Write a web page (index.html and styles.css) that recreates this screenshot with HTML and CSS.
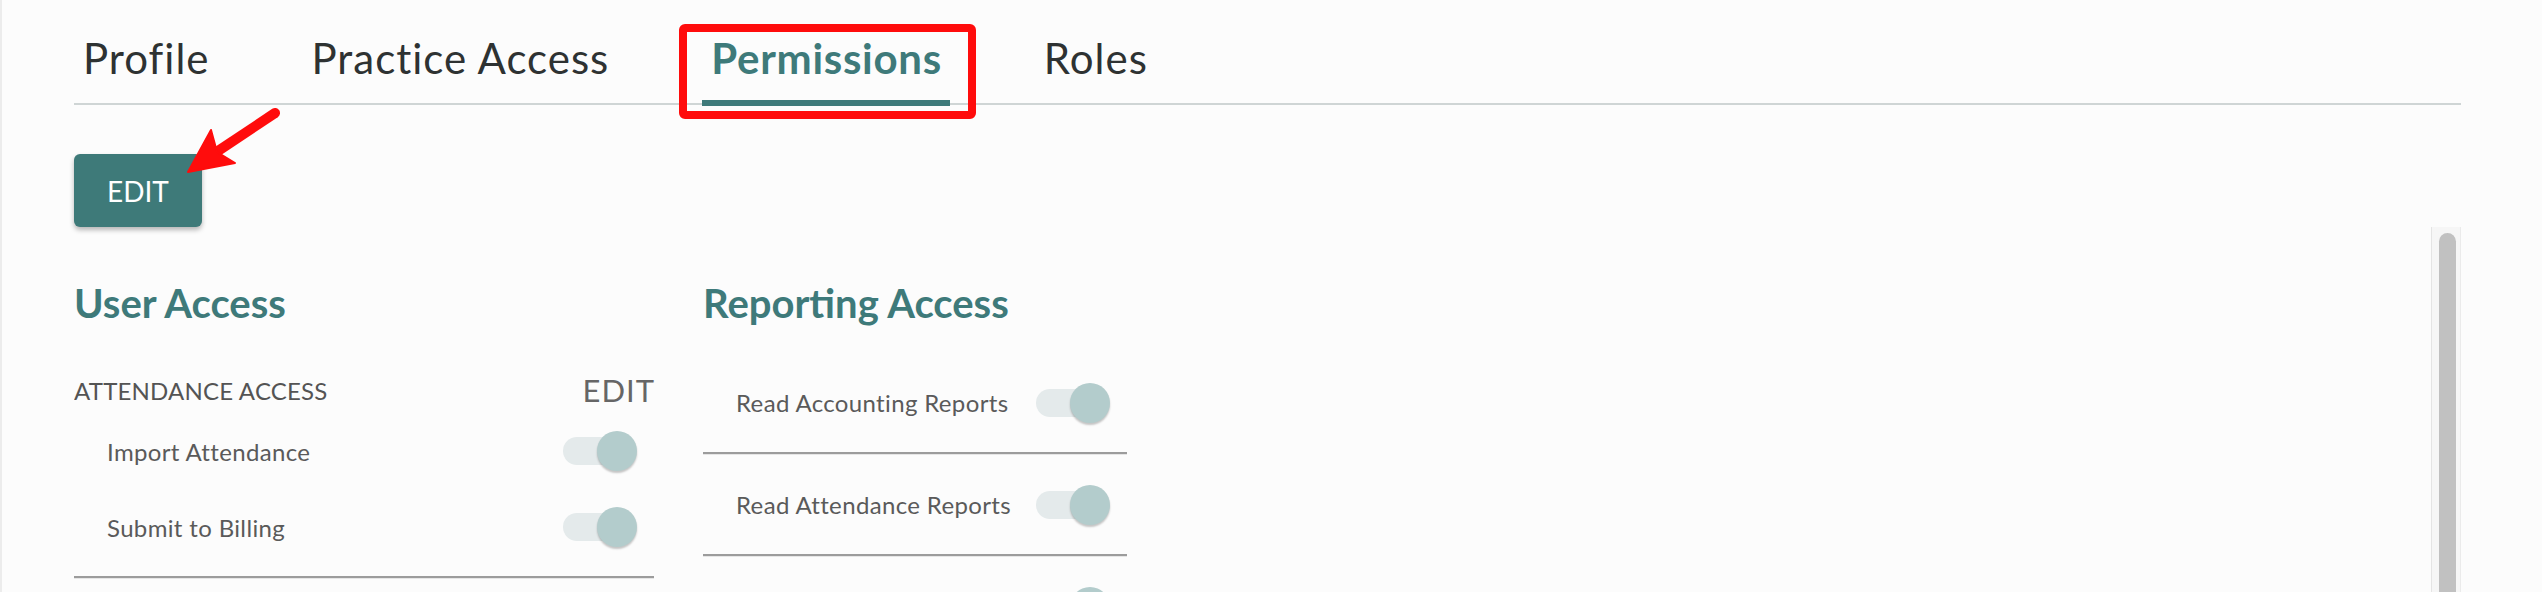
FILE: index.html
```
<html>
<head>
    <link rel="stylesheet" href="styles.css">
</head>
<body>
    <div class="page">
        <nav class="tabs">
            <a class="tab">Profile</a>
            <a class="tab">Practice Access</a>
            <a class="tab tab-active">Permissions<span class="callout"></span></a>
            <a class="tab">Roles</a>
        </nav>

        <button class="btn-edit">EDIT</button>

        <div class="panel">
            <div class="panel-body">
                <section class="group group-user">
                    <h2 class="group-title">User Access</h2>
                    <div class="group-head">
                        <span class="group-label">ATTENDANCE ACCESS</span>
                        <span class="link-edit">EDIT</span>
                    </div>
                    <div class="perm">
                        <span>Import Attendance</span>
                        <span class="toggle"><span class="track"></span><span class="knob"></span></span>
                    </div>
                    <div class="perm">
                        <span>Submit to Billing</span>
                        <span class="toggle"><span class="track"></span><span class="knob"></span></span>
                    </div>
                    <div class="divider"></div>
                </section>

                <section class="group group-report">
                    <h2 class="group-title">Reporting Access</h2>
                    <div class="perm perm-line">
                        <span>Read Accounting Reports</span>
                        <span class="toggle"><span class="track"></span><span class="knob"></span></span>
                    </div>
                    <div class="perm perm-line">
                        <span>Read Attendance Reports</span>
                        <span class="toggle"><span class="track"></span><span class="knob"></span></span>
                    </div>
                    <div class="perm perm-line">
                        <span>Read Billing Reports</span>
                        <span class="toggle"><span class="track"></span><span class="knob"></span></span>
                    </div>
                </section>
            </div>
            <div class="scrollbar"><div class="thumb"></div></div>
        </div>

        <!-- annotation arrow pointing at the edit button -->
        <svg class="arrow" width="300" height="200" viewBox="0 0 300 200" xmlns="http://www.w3.org/2000/svg">
            <line x1="275" y1="113" x2="212" y2="155" stroke="#ff0c0c" stroke-width="10" stroke-linecap="round"/>
            <path d="M188 172 L211 130 L217 152 L235 163 Z" fill="#ff0c0c" stroke="#ff0c0c" stroke-width="2" stroke-linejoin="round"/>
        </svg>
    </div>
</body>
</html>
```

FILE: styles.css
```
html, body {
    margin: 0;
    height: 100%;
}
body {
    background: #fcfcfc;
    font-family: Lato, "Open Sans", sans-serif;
    overflow: hidden;
    box-shadow: inset 2px 0 0 #ececec;
}
.page {
    position: relative;
    display: flex;
    flex-direction: column;
    height: 592px;
    box-sizing: border-box;
    padding: 33px 81px 0 74px;
}

/* tabs */
.tabs {
    display: flex;
    align-items: flex-end;
    gap: 85px;
    border-bottom: 2px solid #cfd5d5;
}
.tab {
    position: relative;
    font-size: 42px;
    line-height: 50px;
    letter-spacing: 1px;
    color: #2e3232;
    padding: 0 8px 17px 9px;
    border-bottom: 6px solid transparent;
    margin-bottom: -3px;
    cursor: pointer;
}
.tab-active {
    color: #3e7a7a;
    font-weight: 700;
    letter-spacing: 0.7px;
    border-bottom-color: #3e7a7a;
}
.callout {
    position: absolute;
    left: -23px;
    top: -9px;
    right: -26px;
    bottom: -19px;
    border: 8px solid #ff0c0c;
    border-radius: 6px;
}

/* edit button */
.btn-edit {
    align-self: flex-start;
    margin-top: 49px;
    height: 73px;
    padding: 0 33px;
    background: #3e7a79;
    color: #fff;
    border: 0;
    border-radius: 6px;
    font-family: Lato, sans-serif;
    font-size: 28px;
    box-shadow: 0 3px 5px rgba(0, 0, 0, 0.28);
    cursor: pointer;
}

/* scroll panel */
.panel {
    flex: 1;
    display: flex;
    min-height: 0;
}
.panel-body {
    flex: 1;
    display: flex;
    align-items: flex-start;
    gap: 49px;
    padding-top: 52px;
    overflow: hidden;
}
.scrollbar {
    display: flex;
    width: 30px;
    box-sizing: border-box;
    padding: 6px 4px 0 7px;
    background: #f6f6f6;
    border-left: 1px solid #e4e4e4;
    border-right: 1px solid #ebebeb;
}
.thumb {
    flex: 1;
    background: #c1c1c1;
    border-radius: 9px 9px 0 0;
}

/* permission groups */
.group-user {
    width: 580px;
}
.group-report {
    width: 424px;
}
.group-title {
    margin: 0;
    font-size: 40px;
    line-height: 48px;
    font-weight: 700;
    color: #3e7a7a;
}
.group-head {
    display: flex;
    justify-content: space-between;
    align-items: center;
    height: 40px;
    margin: 43px 0 3px 0;
}
.group-label {
    font-size: 24px;
    letter-spacing: 0.2px;
    color: #545454;
}
.link-edit {
    font-size: 31px;
    letter-spacing: 1px;
    margin-right: -1px;
    color: #666;
    cursor: pointer;
}
.perm {
    display: flex;
    justify-content: space-between;
    align-items: center;
    height: 76px;
    padding: 0 17px 0 33px;
    font-size: 24px;
    letter-spacing: 0.35px;
    color: #5a5a5a;
}
.perm-line {
    height: 99px;
    border-bottom: 2px solid #9c9c9c;
    box-shadow: 0 1px 0 #e6e6e6;
}
.perm-line:first-of-type {
    margin-top: 26px;
}
.perm-line + .perm-line {
    margin-top: 1px;
}
.divider {
    margin-top: 11px;
    border-top: 2px solid #9c9c9c;
    border-bottom: 1px solid #e6e6e6;
}

/* switch */
.toggle {
    display: flex;
    align-items: center;
    width: 74px;
}
.track {
    width: 64px;
    height: 28px;
    border-radius: 14px;
    background: #e4eaeb;
}
.knob {
    width: 40px;
    height: 40px;
    margin-left: -30px;
    border-radius: 50%;
    background: #b3cccc;
    box-shadow: 0 2px 2px rgba(0, 0, 0, 0.22);
}

/* annotation */
.arrow {
    position: absolute;
    left: 0;
    top: 0;
    pointer-events: none;
}
```
